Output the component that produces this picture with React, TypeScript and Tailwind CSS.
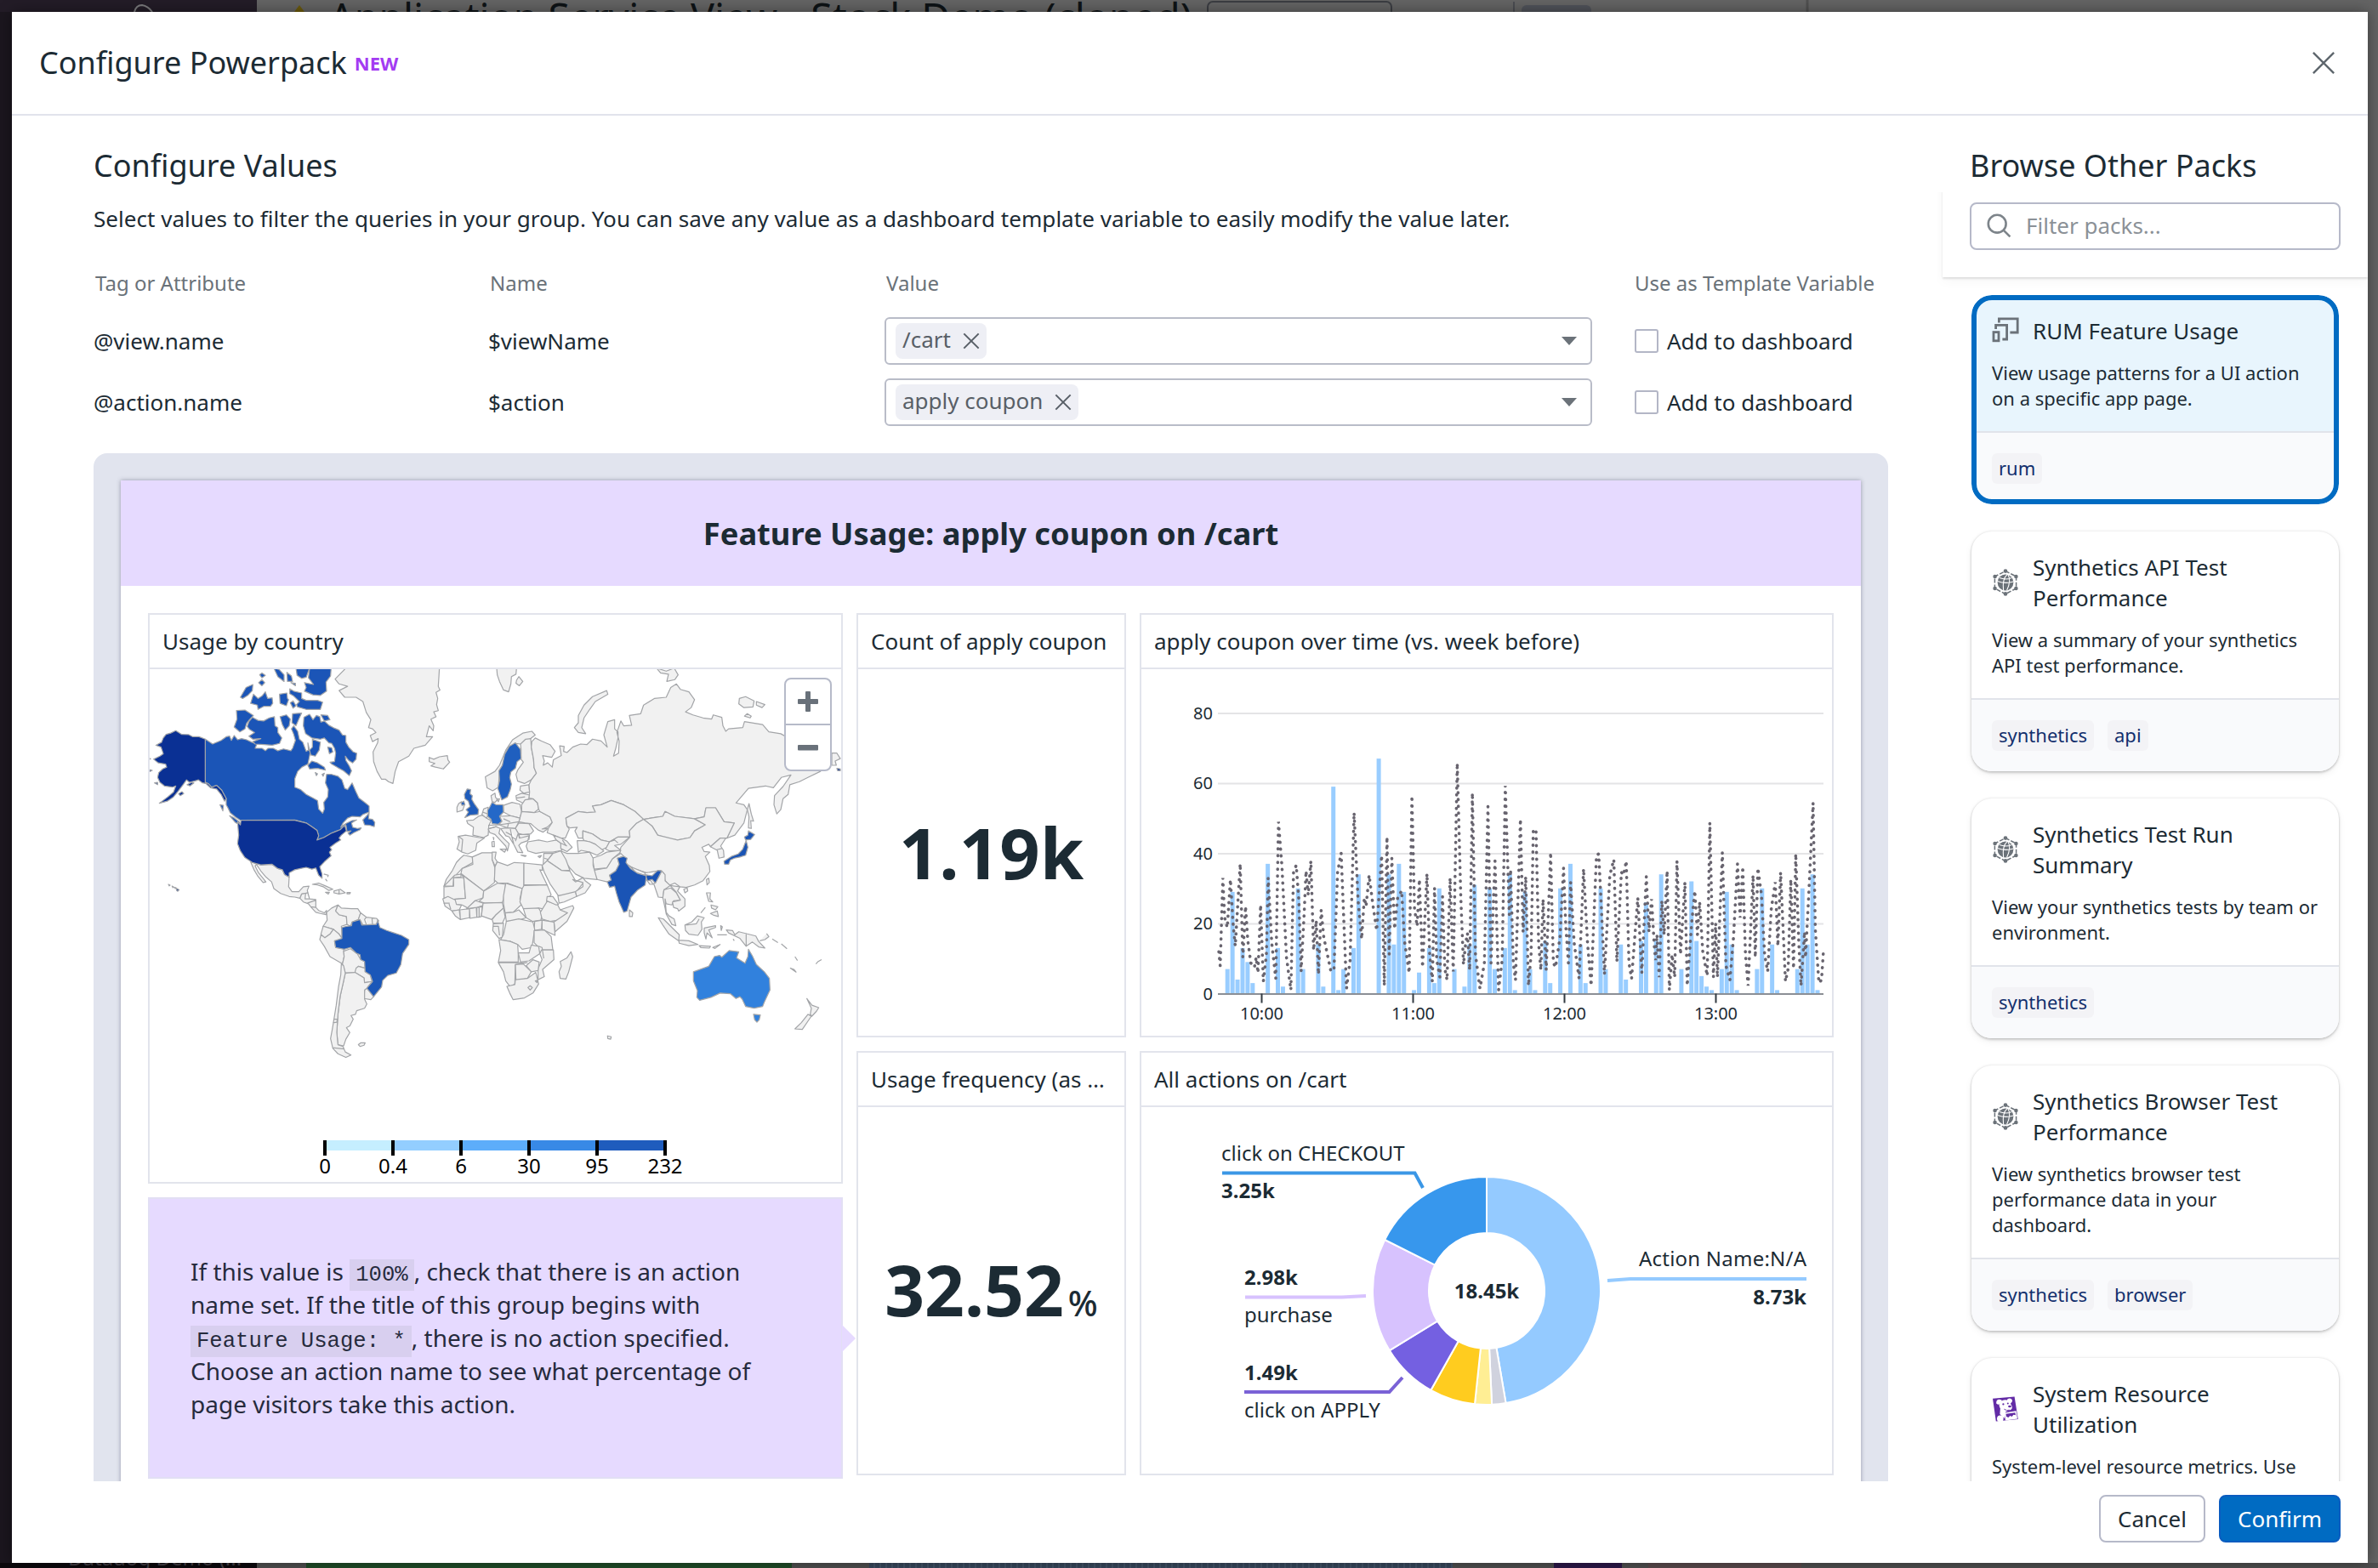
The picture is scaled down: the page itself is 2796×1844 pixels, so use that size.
import React from "react";

/* ---------- icons ---------- */

function CloseIcon({ className, strokeWidth }: { className: string; strokeWidth: number }) {
  return (
    <svg className={className} viewBox="0 0 30 30" fill="none" stroke="currentColor" strokeWidth={strokeWidth}>
      <path d="M2 2L28 28M28 2L2 28" />
    </svg>
  );
}

function SearchIcon() {
  return (
    <svg className="size-[29px] text-[#7d848a]" viewBox="0 0 29 29" fill="none" stroke="currentColor" strokeWidth="2.6">
      <circle cx="12.2" cy="12.2" r="10.4" />
      <path d="M19.6 19.6L27.4 27.4" />
    </svg>
  );
}

function DevicesIcon() {
  return (
    <svg className="size-[32px] text-[#6b7279]" viewBox="0 0 32 32" fill="none" stroke="currentColor" strokeWidth="2.8">
      <rect x="2" y="17.6" width="6" height="10.2" />
      <path d="M4.6 14V9.3H17.6V26H12.4" />
      <path d="M8.4 6.4V1.8H30.2V18H21.4" />
    </svg>
  );
}

function GlobeNetworkIcon() {
  return (
    <svg className="size-[32px] text-[#6b7279]" viewBox="0 0 32 32">
      <path
        d="M16 2.6L28.6 9V23L16 29.6L3.4 23V9Z"
        fill="none"
        stroke="currentColor"
        strokeWidth="1.5"
        strokeDasharray="5 2"
      />
      <circle cx="16" cy="16" r="9.4" fill="currentColor" />
      <path
        d="M6.6 14.4Q16 18 25.4 15M18 6.6Q12 12 13.6 25.4M19 6.8Q23 14 17.6 25.2M9 10.6Q16 13.4 23.4 10.4"
        fill="none"
        stroke="#fff"
        strokeWidth="1.1"
      />
      <g fill="currentColor">
        <circle cx="16" cy="2.6" r="2.3" />
        <circle cx="28.4" cy="9" r="2.3" />
        <circle cx="28.4" cy="23" r="2.3" />
        <circle cx="16" cy="29.4" r="2.3" />
        <circle cx="3.6" cy="23" r="2.3" />
        <circle cx="3.6" cy="9" r="2.3" />
      </g>
    </svg>
  );
}

function DogIcon() {
  return (
    <svg className="size-[32px]" viewBox="0 0 32 32">
      <path d="M1 3.8L26.6 1.4L30.8 28L4.8 30.6Z" fill="#632ca6" />
      <g fill="#fff">
        <ellipse cx="15.6" cy="11.6" rx="7" ry="6.4" />
        <path d="M12 6C8 3.2 4.6 5.6 5.2 9.6C6.6 11.4 9 11 10 9Z" />
        <path d="M17.6 5.6C19 2.6 23.4 3 24 6C24 8.4 22.4 9.4 20.6 9Z" />
        <ellipse cx="19.6" cy="14" rx="4.2" ry="3.4" />
        <path d="M10 14L9.4 22L14.6 27L16 19.6L20 17.6L17 14Z" />
        <circle cx="9.8" cy="27.4" r="3.8" />
        <path d="M14.6 20.4L28.6 18.2L30 27.4L16 29.4Z" />
      </g>
      <path d="M16.4 21.8L27.4 20.2L28 23.2L25.4 22.8L23.6 25L21.4 24L19.4 26L17 25Z" fill="#632ca6" />
      <g fill="#632ca6">
        <circle cx="13.4" cy="10.4" r="1.1" />
        <circle cx="18.8" cy="9.6" r="1" />
        <ellipse cx="21" cy="13" rx="1.9" ry="1.3" />
      </g>
      <path d="M14.4 16.2Q17.4 18.6 20.8 17.2" fill="none" stroke="#632ca6" strokeWidth="0.9" />
    </svg>
  );
}

/* ---------- world map ---------- */

const WEST_LAND = [
  "M740 240L1070 240 1066 300 1072 312 1058 320 1064 340 1060 360 1066 380 1050 384 1058 400 1040 408 1050 430 1048 446 1034 430 1024 466 1046 466 1020 494 980 504 962 530 926 548 914 580 906 620 890 614 880 606 866 606 850 580 838 548 836 516 852 486 854 472 834 482 826 462 846 452 834 440 820 436 828 410 812 386 800 350 776 336 736 336 716 314 746 300 716 292 702 276Z",
  "M404 878L440 888 480 886 500 900 516 904 524 920 540 928 538 960 550 976 574 976 590 960 610 958 604 972 606 980 584 984 578 998 560 994 540 992 510 982 486 966 478 944 456 926 440 908 424 886 420 892 432 914 446 930 458 944 448 946 430 926 416 904Z",
  "M578 998L584 984 606 980 612 1000 634 1002 634 1028 644 1038 664 1046 672 1038 670 1052 650 1048 634 1044 618 1028 608 1016 590 1010ZM598 982L596 1000 612 1000M604 1014L634 1004M616 1026L634 1028",
  "M622 952L644 948 670 958 694 968 680 972 660 960 640 954Z",
  "M698 974L720 968 738 980 716 984 698 980ZM716 970V984M744 979L756 979 754 983 744 983ZM668 978L682 978 678 984ZM662 918L678 922 676 928M668 934L674 942",
  "M672 1044L690 1030 712 1020 704 1040 716 1052 742 1058 744 1084 724 1090 728 1132 716 1116 696 1100 660 1090 674 1070Z",
  "M712 1020L724 1030 760 1032 782 1032 792 1046 784 1068 762 1076 756 1090 744 1084 742 1058 716 1052 704 1040Z",
  "M792 1046L812 1060 848 1064 856 1072 846 1084 800 1086 792 1072 784 1068ZM812 1060L806 1068 812 1084M832 1062L834 1084",
  "M660 1090L696 1100 684 1116 666 1128 652 1116Z",
  "M666 1128L684 1116 696 1100 716 1116 728 1132 700 1140 704 1160 732 1164 734 1190 728 1214 706 1202 684 1190 664 1156 648 1134 652 1118Z",
  "M732 1172L756 1164 780 1180 792 1200 806 1206 808 1228 784 1222 772 1242 738 1244 728 1214 734 1190Z",
  "M772 1242L776 1228 784 1222 808 1228 808 1240 826 1250 832 1272 806 1276 804 1260Z",
  "M814 1294L838 1322 828 1332 804 1328 806 1300Z",
  "M738 1244L772 1242 804 1260 806 1276 832 1272 814 1294 806 1300 806 1330 814 1346 806 1360 778 1368 774 1380 758 1384 766 1396 754 1418 742 1424 754 1440 740 1462 732 1484 712 1480 708 1440 712 1380 720 1320 732 1270Z",
  "M724 1214L732 1220 738 1244 732 1270 720 1320 712 1380 708 1440 712 1480 730 1486 738 1504 758 1514 740 1522 712 1510 694 1492 686 1460 692 1430 698 1396 706 1350 714 1290 722 1250ZM696 1396L710 1396 708 1406 694 1408M694 1490L734 1494",
  "M784 1480L792 1474 808 1474 804 1482 790 1486Z",
];

const ALASKA_AND_STATES = [
  "M244 474L222 466 200 466 186 459 160 458 140 446 122 454 106 458 96 470 90 484 70 494 88 500 96 522 84 530 62 540 78 552 104 556 108 566 94 572 80 584 76 600 84 616 100 628 128 632 140 628 132 648 112 664 82 685 110 678 132 664 148 646 164 626 178 608 188 616 206 612 220 608 234 618 246 620 262 634 284 638 300 656 312 678 318 670 302 642 284 626 266 632 254 620 244 616Z",
  "M150 654L162 647 168 653 156 660ZM65 618L76 616 76 624ZM180 624L196 616 204 618 190 628Z",
  "M114 952L120 955 117 957ZM127 958L133 961 130 963ZM142 965L152 970 147 975 143 972ZM136 962L142 964 138 966Z",
  "M46 536L51 539 46 541ZM46 574L57 577 47 581Z",
  "M358 746L368 756 370 741 560 741 600 750 620 762 638 774 644 792 638 806 662 798 688 784 704 778 720 772 736 758 742 776 724 790 716 800 722 806 704 816 684 830 690 838 682 846 688 858 664 878 648 894 656 918 656 932 644 922 634 898 620 902 600 896 580 900 560 904 540 914 540 928 524 920 516 904 500 900 480 886 440 888 410 880 384 864 368 842 358 818 362 790Z",
];

const CANADA = [
  "M244 474L270 490 300 478 318 466 330 464 336 478 346 462 358 476 372 472 390 476 408 484 426 490 420 504 444 504 456 512 466 504 484 504 500 512 520 506 546 512 552 504 562 478 556 458 548 440 556 430 570 448 576 474 588 484 600 514 608 510 606 486 614 520 606 556 585 566 570 580 560 604 560 632 580 640 600 656 624 668 640 676 644 704 658 718 664 704 662 682 676 664 678 640 668 618 672 590 690 590 712 596 726 608 736 636 746 640 762 618 776 648 786 668 806 682 822 694 822 714 800 722 790 730 762 728 746 734 730 750 722 764 740 752 762 742 778 740 760 750 764 764 780 768 794 766 790 772 768 782 754 790 748 784 758 776 744 778 740 756 720 772 704 778 688 784 662 798 638 806 644 792 638 774 620 762 600 750 560 740 368 741 350 730 332 716 324 700 318 690 318 670 302 642 284 626 266 632 254 620 244 616Z",
  "M822 716L814 726 800 740 806 756 826 758 840 762 842 748 834 738 820 736Z",
  "M330 726L344 732 364 746 370 758 350 748ZM296 690L308 692 306 710Z",
  "M592 402L612 392 624 410 636 396 648 400 652 418 664 414 680 428 700 438 716 444 728 460 740 462 740 484 750 500 766 516 778 520 776 540 764 552 750 544 738 530 740 544 752 562 760 578 752 594 732 578 712 568 690 556 684 550 700 548 704 520 700 504 690 488 680 486 664 470 650 474 620 470 598 456 590 430Z",
  "M622 474L650 484 646 510 632 530 616 526 612 510 622 500ZM620 546L640 552 664 566 668 576 640 570 612 572 606 560ZM676 500L690 502 694 516 682 522ZM652 394L676 396 684 410 664 414ZM632 584L640 588 636 594ZM656 590L664 586 660 596Z",
  "M410 402L430 412 450 414 470 404 488 400 490 430 500 436 500 452 514 470 506 488 480 494 452 492 420 490 412 482 440 472 412 474 398 464 418 452 400 442 392 432 398 416Z",
  "M354 380L384 378 414 396 400 410 390 422 384 440 366 450 346 434 356 408Z",
  "M508 400L530 394 544 408 540 430 526 444 516 426ZM552 390L584 388 574 408 564 430 550 420Z",
  "M404 356L414 326 430 340 444 332 456 318 464 340 480 338 482 356 474 366 450 366 430 376 428 362Z",
  "M368 336L388 304 412 294 410 314 394 330 376 340ZM432 288L444 278 454 288 444 298ZM436 262L444 256 456 264 444 272Z",
  "M506 326L532 322 534 340 538 344 530 364 508 356ZM544 354L554 348 564 364 554 372Z",
  "M542 308L556 316 584 322 584 340 600 346 640 346 658 352 650 376 600 376 570 368 566 360 576 350 556 332 542 324Z",
  "M612 240L688 240 686 266 670 286 672 316 650 330 624 328 594 316 600 304 594 288 626 294 608 272Z",
  "M564 240L612 240 600 270 584 274 568 264ZM486 240L504 244 522 262 522 284 500 268ZM532 254L548 266 552 284 534 284ZM546 288L562 290 562 298Z",
];

const BRAZIL =
  "M762 1076L790 1068 796 1086 848 1084 852 1070 860 1094 884 1104 910 1112 936 1120 962 1134 962 1150 940 1180 934 1216 918 1244 888 1252 870 1268 866 1290 838 1322 814 1294 834 1272 826 1250 808 1240 806 1206 792 1200 790 1184 776 1178 756 1160 734 1166 704 1160 700 1138 726 1130 726 1094 744 1090 760 1088Z";

const EAST_LAND = [
  "M14 534L30 540 50 532 78 528 80 542 86 550 64 572 36 566 20 562 34 554 14 548Z",
  "M252 240L322 240 320 260 304 268 302 292 294 318 276 312 262 284 254 262ZM322 280L330 268 344 284 332 298 320 290Z",
  "M212 598L246 580 262 560 284 510 308 476 344 454 376 448 388 460 372 472 350 484 336 490 318 488 304 500 290 520 272 560 262 580 258 632 238 644 218 634Z",
  "M336 490L354 474 372 472 374 500 382 540 384 568 392 586 374 608 350 620 326 612 320 590 326 576 346 550 338 540 338 508Z",
  "M232 660L246 652 248 666 256 672 246 682 236 680ZM252 672L262 670 258 680Z",
  "M118 686L128 680 138 692 132 708 112 714 112 698Z",
  "M146 742L170 740 188 728 200 724 220 736 232 742 224 760 222 790 206 798 168 790 170 764 150 752Z",
  "M200 722L206 704 222 698 220 728 216 734ZM202 714L220 720",
  "M116 794L142 790 190 798 208 800 182 816 178 840 150 852 130 846 112 836 120 812ZM120 796L132 804 128 846",
  "M222 770L250 762 264 768 260 784 280 804 296 818 290 842 284 826 266 808 246 788 228 782Z",
  "M264 836L286 836 280 846ZM235 812L243 810 244 828 236 828ZM237 798L242 798 241 806",
  "M276 692L306 682 334 688 340 712 334 734 300 726 276 714Z",
  "M336 628L366 624 368 648 348 652 334 642ZM320 660L340 652 368 658 366 670 348 686 322 674ZM320 668L352 664",
  "M340 690L352 674 380 670 396 684 400 704 384 716 340 712Z",
  "M334 734L340 712 384 716 404 712 440 730 448 748 430 764 412 770 434 768 416 780 400 774 384 762 372 752 352 750 330 746Z",
  "M262 728L300 726 334 734 330 746 318 768 290 766 260 756 270 744ZM222 758L260 756 290 752 330 746M224 768L250 762M276 736L300 746M290 766L294 750",
  "M318 768L330 750 366 752 382 776 372 786 344 788 328 784ZM330 788L368 788 366 804 336 806Z",
  "M266 768L290 766 318 768 328 784 332 800 366 792 362 808 338 816 330 824 344 848 326 846 312 820 296 796 284 792ZM284 780L304 790 312 818M300 770L306 796 322 806M328 784L318 810",
  "M338 856L356 858 352 860ZM398 860L410 857 404 864Z",
  "M362 812L400 806 430 812 462 806 478 816 482 840 450 846 416 846 390 850 362 842 356 826Z",
  "M376 482L388 470 410 480 440 492 458 514 446 534 414 528 420 546 416 560 432 552 448 566 452 542 480 528 474 496 490 498 488 514 500 518 520 500 548 490 570 492 590 474 620 480 642 500 630 460 644 416 668 410 668 440 680 450 680 470 672 504 664 530 682 520 684 480 676 452 690 414 700 430 728 428 720 396 760 390 770 362 808 340 850 336 866 304 886 292 900 310 930 318 950 344 938 370 918 384 944 394 980 404 1010 408 1016 394 1046 402 1050 430 1060 448 1070 440 1120 436 1126 416 1190 426 1212 450 1254 456 1300 480 1380 500 1430 520 1394 580 1350 600 1320 614 1286 624 1280 656 1262 670 1254 706 1240 720 1230 690 1232 660 1262 630 1290 592 1256 600 1228 634 1200 628 1140 636 1096 684 1124 690 1136 706 1124 750 1092 790 1064 800 1090 750 1054 746 1024 700 990 700 984 730 950 736 880 728 846 712 838 728 810 732 770 738 740 712 700 690 656 676 620 690 590 694 600 714 570 716 540 712 496 734 500 760 508 770 494 800 480 800 452 790 430 782 434 768 448 748 440 730 404 712 400 704 396 684 380 670 366 668 368 648 366 624 374 608 392 586 384 568 382 540 374 500Z",
  "M1142 686L1150 720 1158 744 1148 742 1150 768 1140 766 1142 730 1136 706Z",
  "M1434 520L1452 520 1464 538 1446 546 1450 560 1434 560Z",
  "M640 314L644 326 600 350 580 376 560 404 552 436 566 456 540 452 526 436 540 420 540 396 560 362 590 334Z",
  "M816 240L850 250 878 240 892 262 880 278 852 284 858 260 830 256Z",
  "M1108 340L1130 334 1160 348 1156 368 1124 370 1106 358ZM1168 350L1198 360 1188 370 1168 362ZM1126 398L1136 390 1150 398 1146 404Z",
  "M496 734L540 712 570 716 600 714 590 694 620 690 656 676 700 690 740 712 770 738 744 752 720 776 722 796 680 796 650 812 620 806 590 786 556 776 556 800 540 800 528 776 536 764 510 766 500 760Z",
  "M556 776L590 786 620 806 650 812 640 830 620 840 600 820 580 812 560 808 556 800Z",
  "M536 808L560 808 580 812 600 820 630 842 606 856 580 846 550 840 540 846Z",
  "M650 812L680 796 722 796 690 820 668 824 690 840 650 842 636 836ZM650 812L668 806 680 816",
  "M770 738L810 732 838 728 846 712 880 728 950 736 988 756 950 776 934 798 890 806 850 800 820 790 800 760Z",
  "M770 738L800 760 820 790 890 806 934 798 950 776 988 756 950 736 984 730 990 700 1024 700 1054 746 1090 750 1064 800 1040 800 1006 828 1000 820 976 830 984 844 1004 846 988 860 1002 890 1004 910 980 940 950 954 920 962 898 960 880 948 860 956 846 940 840 914 830 906 780 914 740 902 712 886 690 870 686 848 690 830 722 796 720 776 744 752Z",
  "M912 968L924 964 926 974 916 980ZM992 936L1000 932 1002 946 994 954Z",
  "M1006 828L1040 800 1060 800 1042 826 1052 840 1054 862 1036 866 1030 840ZM1028 838L1046 834",
  "M724 894L776 914 774 922 744 914ZM780 936L796 940 804 952 792 952ZM720 1036L732 1046 730 1058 720 1058Z",
  "M606 936L592 906 640 898 660 868 690 850 700 860 678 866 684 886 672 908 650 922 656 938 642 944Z",
  "M590 866L620 856 640 846 690 840 686 848 660 868 640 898 596 902Z",
  "M478 842L500 850 540 850 580 846 592 866 592 890 606 936 560 932 530 918 510 898 496 880Z",
  "M452 790L480 800 500 810 518 830 500 844 478 834 478 816 462 806ZM478 816L500 826M484 806L496 824",
  "M450 850L478 842 496 870 510 906 480 906 440 880 430 874Z",
  "M418 850L450 850 430 874 416 890ZM420 866L434 870",
  "M412 890L430 874 480 906 510 908 530 940 560 944 530 980 470 990 440 950 420 912Z",
  "M468 990L530 976 534 992 490 1010 472 1014Z",
  "M520 936L530 944 556 930 564 940 584 954 564 980 534 992 530 976 556 960 556 946Z",
  "M136 856L166 862 168 880 130 900 104 926 66 958 74 936 96 906 110 880 124 866Z",
  "M166 862L200 848 240 848 236 870 246 898 244 946 206 974 126 916 130 900 168 886Z",
  "M236 846L250 846 246 866 254 878 246 892 236 870Z",
  "M254 878L290 890 314 880 348 882 348 968 290 948 256 948 244 938 246 894Z",
  "M348 882L412 888 414 906 404 904 430 954 348 954Z",
  "M66 960L100 958 100 930 136 930 142 998 92 1002 66 996Z",
  "M66 958L104 922 126 918 126 928 100 930 98 958Z",
  "M126 918L206 974 204 996 176 1006 150 1030 130 1020 106 1018 92 1002 142 998 136 930Z",
  "M206 974L256 948 284 952 276 1000 272 1012 210 1014 190 1008 204 996Z",
  "M284 948L342 966 334 1000 338 1020 310 1044 282 1046 276 1016 276 990Z",
  "M348 956L430 954 444 986 430 1004 424 1034 400 1030 370 1040 346 1032 334 1010 342 966Z",
  "M62 1000L80 992 106 1004 110 1018 128 1020 120 1036 96 1040 70 1024ZM64 1014L86 1014M84 1016L90 1034",
  "M94 1040L120 1036 124 1068 106 1056ZM122 1036L156 1032 156 1062 124 1068ZM156 1032L180 1028 182 1060 158 1064Z",
  "M146 1032L176 1006 206 1014 200 1026ZM182 1028L190 1026 190 1060 182 1060ZM190 1026L202 1022 198 1058 190 1060Z",
  "M204 1014L272 1012 276 1030 250 1052 234 1068 198 1056Z",
  "M276 1030L282 1060 272 1080 240 1080 236 1068 250 1052Z",
  "M282 1046L310 1044 330 1036 356 1062 330 1070 286 1074Z",
  "M346 1032L400 1030 412 1050 408 1070 378 1074 356 1062Z",
  "M430 1008L466 1018 476 1036 502 1046 470 1070 440 1074 412 1066 406 1044Z",
  "M430 992L450 992 470 1018 462 1020 428 1006Z",
  "M476 1036L520 1022 524 1030 500 1074 458 1108 454 1076 502 1046Z",
  "M412 1070L440 1074 454 1076 458 1120 412 1100Z",
  "M386 1074L412 1070 410 1100 384 1104Z",
  "M240 1082L276 1080 272 1126 260 1130 238 1104ZM240 1090L258 1090 262 1120",
  "M286 1074L330 1066 380 1076 386 1100 378 1150 376 1160 342 1166 326 1150 300 1140 266 1134 276 1118Z",
  "M384 1104L420 1102 444 1124 450 1168 410 1168 384 1144Z",
  "M260 1134L300 1140 326 1150 328 1180 328 1208 258 1208 266 1170Z",
  "M328 1178L366 1178 374 1152 400 1156 404 1180 366 1204 336 1208Z",
  "M410 1168L452 1168 454 1200 414 1232 420 1256 398 1266 398 1230 412 1200 404 1180ZM400 1156L412 1160 418 1196",
  "M356 1220L380 1200 402 1208 398 1236 374 1240Z",
  "M258 1210L360 1210 318 1216 316 1280 300 1290 284 1270 276 1240Z",
  "M318 1216L346 1214 374 1240 360 1262 320 1270Z",
  "M288 1288L316 1282 318 1266 360 1262 390 1242 400 1280 380 1310 350 1326 310 1332 298 1310ZM362 1292L370 1286 378 1292 370 1300ZM388 1270L396 1268 394 1276Z",
  "M514 1174L520 1190 506 1240 496 1264 476 1262 472 1240 480 1222 476 1206 500 1194Z",
  "M806 950L822 930 834 908 846 920 846 940 864 956 842 970 838 996 822 994Z",
  "M842 970L866 964 886 980 900 1004 876 1006 870 1020 850 1016 846 1000 850 1044 860 1056 878 1066 884 1088 870 1084 850 1050 846 1030 838 996Z",
  "M864 956L898 960 890 974 916 1000 916 1024 894 1040 890 1032 876 1028 872 1010 900 1004 884 976Z",
  "M822 1062L840 1066 870 1094 896 1118 894 1138 860 1116 838 1086ZM894 1136L930 1138 962 1150 930 1154 896 1146Z",
  "M966 1154L1006 1156 1002 1162 972 1160ZM1014 1160L1040 1150 1022 1163Z",
  "M916 1086L940 1076 960 1056 984 1062 974 1076 976 1100 962 1120 930 1116 918 1104ZM920 1086L956 1082 966 1066",
  "M984 1096L1024 1088 1024 1094 1000 1102 1012 1128 994 1112 990 1132 984 1112Z",
  "M992 980L1006 980 1004 1000 1014 1010 1000 1008ZM1008 1020L1032 1026 1024 1036 1010 1030ZM1006 1048L1030 1040 1034 1058 1018 1054ZM972 1046L988 1028",
  "M1042 1088L1048 1092 1044 1104ZM1030 1118L1064 1118M1086 1132L1090 1138",
  "M1062 1102L1084 1104 1092 1118 1106 1108 1166 1122 1176 1140 1198 1162 1176 1158 1154 1142 1132 1156 1110 1130 1070 1112ZM1132 1112L1132 1156",
  "M1180 1138L1198 1134 1212 1124 1204 1114M1224 1132L1244 1144M1256 1148L1276 1164M1304 1190L1313 1203M1288 1228L1300 1232 1308 1241ZM1378 1214L1386 1206 1398 1200",
  "M1346 1328L1364 1350 1388 1358 1380 1370 1364 1386 1358 1380 1362 1360ZM1350 1380L1362 1386 1330 1430 1304 1428 1326 1408ZM643 1451L656 1454 654 1462 644 1460Z",
];

const EAST_USAGE: [string, string][] = [
  ["#1f5fbf", "M318 486L336 508 338 538 324 548 318 570 302 582 298 600 304 622 300 640 290 664 270 674 256 636 262 610 260 578 272 560 280 524 296 498Z"],
  ["#1f5cbb", "M148 638L160 640 158 654 166 660 164 672 174 688 188 706 186 722 160 724 140 732 152 714 144 706 158 696 152 678 140 670 138 656ZM126 684L136 678 140 690 130 692Z"],
  ["#2468c8", "M236 682L250 690 274 690 276 714 262 728 270 744 258 754 236 752 232 738 220 728 220 708 226 700Z"],
  ["#1a54b5", "M678 866L700 860 712 866 708 880 724 900 750 916 780 924 776 954 750 970 726 994 718 1020 712 1040 700 1044 684 1010 674 980 668 958 650 962 642 944 656 938 650 922 672 908 684 886ZM776 920L800 924 820 906 834 908 822 930 812 948 800 936 784 940Z"],
  ["#1a54b5", "M1140 776L1162 788 1148 804 1130 806 1126 796 1138 790ZM1132 808L1138 830 1130 856 1110 862 1090 866 1076 872 1070 886 1056 886 1054 876 1080 860 1104 852 1120 836Z"],
  ["#3181dd", "M946 1240L1000 1222 1020 1190 1038 1186 1046 1192 1072 1170 1106 1174 1098 1194 1128 1212 1138 1190 1140 1166 1154 1188 1168 1216 1196 1240 1214 1262 1216 1300 1196 1340 1190 1354 1160 1360 1130 1354 1118 1330 1110 1322 1096 1328 1076 1312 1040 1310 1008 1324 968 1334 958 1324 960 1302 946 1270ZM1158 1380L1182 1382 1178 1398 1170 1406 1162 1398Z"],
  ["#0a3094", "M1452 570L1464 572 1464 578 1454 577Z"],
];

function WorldMap() {
  const line = { stroke: "#a3a5a8", strokeWidth: 1.2, vectorEffect: "non-scaling-stroke" as const, strokeLinejoin: "round" as const };
  return (
    <svg className="block h-[603px] w-[813px]" viewBox="176 787 813 603">
      <g transform="translate(160 700) scale(0.33333 0.35714)">
        {WEST_LAND.map((d) => (
          <path key={d} d={d} fill="#f1f1f1" {...line} />
        ))}
        {CANADA.map((d) => (
          <path key={d} d={d} fill="#1b55b7" {...line} />
        ))}
        {ALASKA_AND_STATES.map((d) => (
          <path key={d} d={d} fill="#0a3094" {...line} />
        ))}
        <path d={BRAZIL} fill="#1b57b8" {...line} />
      </g>
      <g transform="translate(500 700) scale(0.33333 0.35714)">
        {EAST_LAND.map((d) => (
          <path key={d} d={d} fill="#f1f1f1" {...line} />
        ))}
        {EAST_USAGE.map(([fill, d]) => (
          <path key={d} d={d} fill={fill} {...line} />
        ))}
      </g>
    </svg>
  );
}

const LEGEND: [string, string][] = [
  ["0", "#c5eeff"],
  ["0.4", "#93ceff"],
  ["6", "#5dadfa"],
  ["30", "#3889e6"],
  ["95", "#1f5cbd"],
];

function MapLegend() {
  return (
    <svg className="absolute top-[550px] left-[180px] h-[50px] w-[452px]" viewBox="356 1337 452 50">
      {LEGEND.map(([label, fill], i) => (
        <rect key={label} x={382 + i * 80} y={1341} width={80} height={12} fill={fill} />
      ))}
      {["0", "0.4", "6", "30", "95", "232"].map((label, i) => (
        <g key={label}>
          <rect x={380 + i * 80} y={1341} width={4} height={18} fill="#000" />
          <text x={382 + i * 80} y={1380} fontSize="24" textAnchor="middle" fill="#000">
            {label}
          </text>
        </g>
      ))}
    </svg>
  );
}

/* ---------- time series ---------- */

/* [slot, value] – one slot is two minutes */
const BARS: [number, number][] = [
  [0, 7], [1, 29], [2, 4], [3, 13], [4, 9], [5, 3], [8, 37], [10, 13], [11, 2], [14, 30], [15, 7], [18, 14], [19, 2],
  [21, 59], [22, 1], [23, 7], [25, 13], [26, 34], [30, 67], [32, 34], [33, 14], [34, 37], [35, 29], [37, 1], [38, 6],
  [40, 13], [41, 3], [42, 30], [45, 7], [47, 2], [48, 14], [49, 31], [52, 30], [53, 7], [55, 13], [56, 34], [57, 1],
  [59, 29], [60, 7], [61, 1], [63, 15], [64, 3], [66, 30], [68, 37], [70, 14], [71, 3], [74, 30], [75, 7], [78, 14],
  [79, 4], [82, 15], [83, 26], [85, 15], [86, 34], [90, 7], [92, 32], [93, 15], [94, 5], [95, 2], [96, 1], [98, 7],
  [99, 29], [100, 14], [101, 1], [105, 7], [106, 30], [108, 14], [109, 1], [113, 7], [114, 30], [115, 14], [116, 34],
  [117, 1],
];

/* previous week, alternating x / y in plot units */
const LAST_WEEK = [
  178, 1230, 181, 1280, 187, 970, 191, 1110, 197, 1145, 204, 975, 210, 1130, 215, 1210, 226, 920, 232, 1250, 238, 1070,
  243, 1190, 250, 1270, 258, 1285, 262, 1250, 266, 1305, 272, 1065, 278, 1335, 285, 1240, 289, 970, 297, 1200, 306, 1325,
  312, 772, 320, 930, 330, 1250, 340, 1365, 346, 950, 352, 925, 358, 1050, 363, 1300, 370, 1090, 374, 945, 379, 1030,
  385, 910, 391, 1225, 397, 1120, 402, 1310, 408, 1083, 414, 1180, 422, 1240, 430, 1300, 437, 1290, 445, 950, 453, 882,
  465, 1360, 473, 1260, 482, 740, 491, 1050, 499, 1185, 505, 1040, 509, 1070, 516, 960, 524, 1060, 533, 1155, 544, 890,
  550, 1350, 556, 825, 561, 1240, 567, 900, 573, 1150, 580, 1040, 589, 1015, 596, 1200, 606, 1305, 612, 680, 618, 1080,
  624, 1140, 629, 975, 636, 1285, 646, 955, 652, 1240, 658, 1335, 663, 1005, 668, 1260, 675, 1320, 681, 1035, 686, 1290,
  691, 1330, 698, 970, 705, 1300, 714, 565, 722, 1040, 728, 1275, 733, 1200, 737, 1165, 742, 1295, 748, 670, 755, 1240,
  765, 1360, 775, 1270, 783, 718, 790, 1270, 799, 910, 807, 1365, 815, 1260, 822, 645, 831, 1100, 834, 940, 840, 1270,
  845, 1330, 856, 762, 862, 1160, 868, 965, 874, 1350, 880, 1240, 885, 800, 891, 800, 897, 1200, 902, 1295, 907, 1045,
  914, 1295, 924, 880, 930, 1270, 935, 1285, 945, 1180, 953, 935, 958, 1140, 964, 1270, 969, 985, 977, 1200, 988, 1325,
  998, 938, 1007, 1200, 1015, 1350, 1027, 890, 1032, 885, 1038, 1070, 1045, 1310, 1057, 960, 1066, 905, 1073, 1265,
  1083, 950, 1088, 960, 1094, 910, 1100, 1270, 1106, 1325, 1120, 1040, 1129, 1305, 1139, 965, 1145, 1160, 1151, 1045,
  1157, 1210, 1160, 1260, 1163, 1170, 1168, 1320, 1174, 1050, 1179, 1170, 1186, 945, 1191, 1365, 1197, 1240, 1203, 1320,
  1208, 910, 1216, 1240, 1226, 985, 1231, 1350, 1241, 1130, 1248, 1015, 1254, 1170, 1259, 1055, 1266, 1230, 1276, 1315,
  1282, 775, 1290, 1320, 1295, 1130, 1299, 1320, 1310, 880, 1318, 1280, 1327, 1330, 1335, 1180, 1344, 920, 1350, 1110,
  1356, 930, 1362, 1240, 1368, 1350, 1379, 960, 1384, 1250, 1390, 935, 1398, 1030, 1405, 1240, 1412, 1300, 1420, 1080,
  1429, 985, 1435, 1210, 1441, 950, 1452, 1335, 1458, 1290, 1464, 975, 1470, 1290, 1475, 885, 1482, 1200, 1487, 1350,
  1495, 1160, 1497, 1250, 1504, 1040, 1514, 705, 1519, 1150, 1527, 1340, 1533, 1330, 1537, 1235,
];

const BASE_Y = 1168.5;
const UNIT_Y = 4.125;

function lastWeekPoints() {
  const out: string[] = [];
  for (let i = 0; i < LAST_WEEK.length; i += 2) {
    const x = 1340 + LAST_WEEK[i] * 0.52296;
    const y = BASE_Y - ((1378 - LAST_WEEK[i + 1]) / 12.375) * UNIT_Y;
    out.push(`${x.toFixed(1)},${y.toFixed(1)}`);
  }
  return out.join(" ");
}

function TimeSeries() {
  return (
    <svg className="block h-[431px] w-[812px]" viewBox="1342 787 812 431">
      {[20, 40, 60, 80].map((v) => (
        <rect key={v} x={1432} y={BASE_Y - v * UNIT_Y - 0.5} width={712} height={2} fill="#e4e4e6" />
      ))}
      {BARS.map(([slot, v]) => (
        <rect key={slot} x={1440.7 + slot * 5.93} y={BASE_Y - v * UNIT_Y} width={5} height={v * UNIT_Y} fill="#99cdff" />
      ))}
      <polyline
        points={lastWeekPoints()}
        fill="none"
        stroke="#68646f"
        strokeWidth="3.6"
        strokeLinecap="round"
        strokeDasharray="0.4 7.6"
      />
      <rect x={1432} y={BASE_Y - 0.5} width={712} height={2} fill="#8b8f95" />
      {[0, 20, 40, 60, 80].map((v) => (
        <text key={v} x={1426} y={BASE_Y - v * UNIT_Y + 7.3} fontSize="20" textAnchor="end" fill="#1c2b34">
          {v}
        </text>
      ))}
      {["10:00", "11:00", "12:00", "13:00"].map((t, i) => (
        <g key={t}>
          <rect x={1482.5 + i * 178} y={BASE_Y} width={2} height={11} fill="#333b42" />
          <text x={1483.5 + i * 178} y={1198.5} fontSize="20" textAnchor="middle" fill="#1c2b34">
            {t}
          </text>
        </g>
      ))}
    </svg>
  );
}

/* ---------- donut ---------- */

const SLICES: [number, number, string][] = [
  [0, 170.3, "#94caff"],
  [170.3, 177.4, "#d0d2de"],
  [177.4, 186, "#ffee94"],
  [186, 209.3, "#ffcc1f"],
  [209.3, 238.4, "#7460e1"],
  [238.4, 296.6, "#d7c2fe"],
  [296.6, 360, "#3797ed"],
];

function slicePath(a: number, b: number) {
  const cx = 1748;
  const cy = 1518;
  const R = 134;
  const r = 68;
  const pt = (deg: number, rad: number) => {
    const t = (deg * Math.PI) / 180;
    return `${(cx + rad * Math.sin(t)).toFixed(2)} ${(cy - rad * Math.cos(t)).toFixed(2)}`;
  };
  return `M${pt(a, R)}A${R} ${R} 0 0 1 ${pt(b, R)}L${pt(b, r)}A${r} ${r} 0 0 0 ${pt(a, r)}Z`;
}

function Donut() {
  return (
    <svg className="block h-[431px] w-[812px]" viewBox="1342 1302 812 431" fontSize="24" fill="#1c2b34">
      {SLICES.map(([a, b, fill]) => (
        <path key={a} d={slicePath(a, b)} fill={fill} stroke="#fff" strokeWidth="2" />
      ))}
      <g fill="none" strokeWidth="4">
        <path d="M1437 1379.5H1663.5L1673 1397" stroke="#3b97e6" />
        <path d="M1464 1525.5H1578L1606 1524" stroke="#d7c2fe" />
        <path d="M1463 1637H1633.5L1649 1620" stroke="#7a62d6" />
        <path d="M1890 1506L1917 1504H2124" stroke="#94caff" />
      </g>
      <text x="1436" y="1365">click on CHECKOUT</text>
      <text x="1436" y="1409" fontWeight="700">3.25k</text>
      <text x="1463" y="1511" fontWeight="700">2.98k</text>
      <text x="1463" y="1555">purchase</text>
      <text x="1463" y="1623" fontWeight="700">1.49k</text>
      <text x="1463" y="1667">click on APPLY</text>
      <text x="2124" y="1489" textAnchor="end" textLength="197">Action Name:N/A</text>
      <text x="2124" y="1534" textAnchor="end" fontWeight="700">8.73k</text>
      <text x="1748" y="1527" textAnchor="middle" fontWeight="700">18.45k</text>
    </svg>
  );
}

/* ---------- form ---------- */

function ValueRow({ tag, name, value }: { tag: string; name: string; value: string }) {
  return (
    <div className="grid h-14 grid-cols-[464px_466px_832px_auto] items-center text-[26px]">
      <span>{tag}</span>
      <span>{name}</span>
      <div className="flex h-14 items-center justify-between rounded-md border-2 border-[#b9bcc8] pr-4 pl-[11px]">
        <div className="flex h-[42px] items-center gap-[14px] rounded-lg bg-[#eeeff5] px-2 pb-[3px] text-[#585f67]">
          {value}
          <CloseIcon className="mt-0.5 size-5" strokeWidth={3} />
        </div>
        <svg className="h-[10px] w-[18px]" viewBox="0 0 18 10">
          <path d="M0 0H18L9 10Z" fill="#6b7279" />
        </svg>
      </div>
      <label className="flex items-center gap-[10px] pl-[50px]">
        <span className="size-7 rounded-[3px] border-2 border-[#b3b6c6] bg-white" />
        Add to dashboard
      </label>
    </div>
  );
}

/* ---------- widgets ---------- */

function Widget({ title, className, children }: { title: string; className: string; children: React.ReactNode }) {
  return (
    <section className={`flex flex-col border-2 border-[#e2e4ec] bg-white ${className}`}>
      <h3 className="h-16 shrink-0 truncate border-b-2 border-[#e2e4ec] px-[15px] text-[26px] leading-[62px]">{title}</h3>
      <div className="relative min-h-0 flex-1">{children}</div>
    </section>
  );
}

function Code({ children }: { children: React.ReactNode }) {
  return (
    <code className="bg-[#d8cfef] px-[7px] py-1 font-['Liberation_Mono',monospace] text-[25.6px] leading-none">{children}</code>
  );
}

function Preview() {
  return (
    <div className="mt-8 h-[1240px] w-[2110px] rounded-t-2xl bg-[#e1e4ee] px-8 pt-8">
      <div className="h-[1208px] bg-white shadow-[0_0_5px_rgba(60,60,90,0.45)]">
        <h2 className="h-[124px] bg-[#e6daff] text-center text-[36.3px] leading-[124px] font-bold">
          Feature Usage: apply coupon on /cart
        </h2>
        <div className="grid grid-cols-[817px_317px_816px] gap-4 p-8">
          <div className="flex flex-col gap-4">
            <Widget title="Usage by country" className="h-[671px]">
              <WorldMap />
              <MapLegend />
              <div className="absolute top-[10px] right-[11px] flex h-[110px] w-14 flex-col rounded-lg border-2 border-[#b6bac9] bg-white text-[#69717a]">
                <div className="flex flex-1 items-center justify-center border-b-2 border-[#b6bac9]">
                  <svg className="size-6" viewBox="0 0 24 24" fill="currentColor">
                    <rect x="0" y="9" width="24" height="6" rx="1" />
                    <rect x="9" y="0" width="6" height="24" rx="1" />
                  </svg>
                </div>
                <div className="flex flex-1 items-center justify-center">
                  <svg className="size-6" viewBox="0 0 24 24" fill="currentColor">
                    <rect x="0" y="9" width="24" height="6.5" rx="1" />
                  </svg>
                </div>
              </div>
            </Widget>
            <div className="relative flex h-[331px] items-center border-2 border-[#e2dff4] bg-[#e6daff] pl-12 text-[28px] leading-[39px] text-[#262b3d]">
              <p className="w-[690px]">
                If this value is <Code>100%</Code>, check that there is an action name set. If the title of this group
                begins with <Code>Feature Usage: *</Code>, there is no action specified. Choose an action name to see
                what percentage of page visitors take this action.
              </p>
              <svg className="absolute top-[148px] -right-[17px] h-8 w-4" viewBox="0 0 16 32">
                <path d="M0 0L16 16L0 32Z" fill="#e6daff" />
              </svg>
            </div>
          </div>
          <div className="flex flex-col gap-4">
            <Widget title="Count of apply coupon" className="h-[499px]">
              <div className="flex h-full items-center justify-center pb-[3px] text-[83px] leading-none font-bold">1.19k</div>
            </Widget>
            <Widget title="Usage frequency (as a percentage)" className="h-[499px]">
              <div className="flex h-full items-baseline justify-center gap-[5px] pt-[169px] text-[82px] leading-[1.1] font-bold">
                32.52<span className="text-[41px] font-medium">%</span>
              </div>
            </Widget>
          </div>
          <div className="flex flex-col gap-4">
            <Widget title="apply coupon over time (vs. week before)" className="h-[499px]">
              <TimeSeries />
            </Widget>
            <Widget title="All actions on /cart" className="h-[499px]">
              <Donut />
            </Widget>
          </div>
        </div>
      </div>
    </div>
  );
}

/* ---------- packs ---------- */

type Pack = { title: string; text: string; tags: string[]; icon: React.ReactNode; selected?: boolean };

const PACKS: Pack[] = [
  {
    title: "RUM Feature Usage",
    text: "View usage patterns for a UI action on a specific app page.",
    tags: ["rum"],
    icon: <DevicesIcon />,
    selected: true,
  },
  {
    title: "Synthetics API Test Performance",
    text: "View a summary of your synthetics API test performance.",
    tags: ["synthetics", "api"],
    icon: <GlobeNetworkIcon />,
  },
  {
    title: "Synthetics Test Run Summary",
    text: "View your synthetics tests by team or environment.",
    tags: ["synthetics"],
    icon: <GlobeNetworkIcon />,
  },
  {
    title: "Synthetics Browser Test Performance",
    text: "View synthetics browser test performance data in your dashboard.",
    tags: ["synthetics", "browser"],
    icon: <GlobeNetworkIcon />,
  },
  {
    title: "System Resource Utilization",
    text: "System-level resource metrics. Use for host monitoring.",
    tags: ["system"],
    icon: <DogIcon />,
  },
];

function PackCard({ pack }: { pack: Pack }) {
  return (
    <article
      className={`relative w-[432px] overflow-hidden rounded-3xl ${
        pack.selected ? "bg-[#e8f5fd]" : "bg-white shadow-[0_0_3px_rgba(0,0,0,0.13),0_2px_3px_rgba(0,0,0,0.16),0_4px_10px_rgba(0,0,0,0.06)]"
      }`}
    >
      <div className="px-6 pt-6 pb-6">
        <div className="flex items-center gap-4">
          <span className="shrink-0">{pack.icon}</span>
          <h4 className="max-w-[300px] text-[26px] leading-9">{pack.title}</h4>
        </div>
        <p className="mt-4 w-[388px] pr-1 text-[22px] leading-[30px]">{pack.text}</p>
      </div>
      <div className="flex gap-4 border-t-2 border-[#e1e4ea] bg-[#f9fafc] p-6">
        {pack.tags.map((t) => (
          <span key={t} className="h-9 rounded-md bg-[#f3f3f6] px-2 text-[22px] leading-[34px] text-[#122f6d]">
            {t}
          </span>
        ))}
      </div>
      {pack.selected && <div className="absolute inset-0 rounded-3xl border-[6px] border-[#006bc2]" />}
    </article>
  );
}

/* ---------- dimmed page under the dialog ---------- */

function Backdrop() {
  return (
    <div className="absolute inset-0 bg-[#646464]">
      <div className="absolute inset-y-0 left-0 w-[302px] bg-[#1b161e]" />
      <div className="absolute top-0 left-0 h-[14px] w-[302px] bg-[#231c27]" />
      <svg className="absolute top-0 left-0 h-[14px] w-[2796px]" viewBox="0 0 2796 14">
        <path d="M158 14Q160 6 167 6Q174 7 179 14" fill="none" stroke="#7a7a7c" strokeWidth="2" />
        <path d="M346 14L352 6L358 14Z" fill="#6b5a0c" />
        <rect x="1420" y="2" width="216" height="40" rx="6" fill="none" stroke="#3b3d42" strokeWidth="2" />
        <path d="M1780 14V2" stroke="#4b4d52" strokeWidth="2" />
        <rect x="1789" y="6" width="82" height="20" rx="6" fill="#50535a" />
        <path d="M2125 0V14" stroke="#505050" strokeWidth="3" />
      </svg>
      <div className="absolute -top-[9px] left-[387px] text-[46.6px] leading-[58px] whitespace-nowrap text-[#0e1316]">
        Application Service View - Stock Demo (cloned)
      </div>
      <div className="absolute bottom-0 left-0 flex h-[6px] w-full bg-[#4f4f4f]">
        <div className="relative h-full w-[302px] bg-[#0c090d]">
          <span className="absolute bottom-0 left-[80px] text-[24px] leading-6 whitespace-nowrap text-[#454047]">
            Datadog Demo (...
          </span>
        </div>
        <div className="ml-[58px] h-full w-[571px] bg-[#1f4c28]" />
        <div className="ml-[91px] h-full w-[686px] bg-[repeating-linear-gradient(90deg,#37475c_0px,#37475c_5px,#445468_5px,#445468_7px)]" />
        <div className="ml-[119px] h-full w-[80px] bg-[#2c1748]" />
        <div className="ml-[31px] h-full w-[180px] bg-[#5a4a4c]" />
      </div>
    </div>
  );
}

export default function App() {
  return (
    <div className="relative h-[1844px] w-[2796px] overflow-hidden font-['Noto_Sans',sans-serif] text-[#1c2b34]">
      <Backdrop />
      <div className="absolute top-[14px] left-[14px] flex h-[1824px] w-[2770px] flex-col bg-white shadow-[0_0_16px_rgba(0,0,0,0.4)]">
        <header className="flex h-[122px] shrink-0 items-center border-b-2 border-[#e1e3ec] pr-[38px] pl-8">
          <h1 className="text-[36px] leading-none">Configure Powerpack</h1>
          <span className="ml-[9px] text-[22px] font-bold text-[#a33bf2]">NEW</span>
          <CloseIcon className="ml-auto size-[28px] text-[#5f676e]" strokeWidth={2.6} />
        </header>

        <div className="flex h-[1606px] shrink-0 overflow-hidden">
          <main className="w-[2270px] shrink-0 pt-[35px] pl-24">
            <h2 className="text-[36px] leading-[48px]">Configure Values</h2>
            <p className="mt-5 text-[26.08px] leading-9">
              Select values to filter the queries in your group. You can save any value as a dashboard template variable
              to easily modify the value later.
            </p>
            <div className="mt-10 mb-[26px] grid h-8 grid-cols-[464px_466px_832px_auto] items-center pl-[2px] text-[24px] text-[#6a7279]">
              <span>Tag or Attribute</span>
              <span>Name</span>
              <span>Value</span>
              <span className="pl-[48px]">Use as Template Variable</span>
            </div>
            <div className="flex flex-col gap-4">
              <ValueRow tag="@view.name" name="$viewName" value="/cart" />
              <ValueRow tag="@action.name" name="$action" value="apply coupon" />
            </div>
            <Preview />
          </main>

          <aside className="w-[500px] shrink-0">
            <div className="h-[190px] px-8 pt-[35px] shadow-[0_2px_2px_rgba(0,0,0,0.11),0_4px_14px_rgba(0,0,0,0.04)] [clip-path:inset(90px_0_-24px_-6px)]" />
            <div className="relative -mt-[190px] h-[190px] px-8 pt-[35px]">
              <h2 className="text-[36px] leading-[48px]">Browse Other Packs</h2>
              <div className="mt-[19px] flex h-14 items-center gap-[17px] rounded-lg border-2 border-[#b6b9c9] bg-white pb-px pl-[18px] text-[26px] text-[#8b9197]">
                <SearchIcon />
                Filter packs...
              </div>
            </div>
            <div className="flex flex-col gap-8 pt-[21px] pl-[34px]">
              {PACKS.map((p) => (
                <PackCard key={p.title} pack={p} />
              ))}
            </div>
          </aside>
        </div>

        <footer className="flex h-24 items-start justify-end gap-4 pt-4 pr-8 text-[26px]">
          <button className="h-14 w-[125px] rounded-lg border-2 border-[#b6b9c9] bg-white">Cancel</button>
          <button className="h-14 w-[143px] rounded-lg border-2 border-[#0a5cc0] bg-[#006bc2] text-white">Confirm</button>
        </footer>
      </div>
    </div>
  );
}
